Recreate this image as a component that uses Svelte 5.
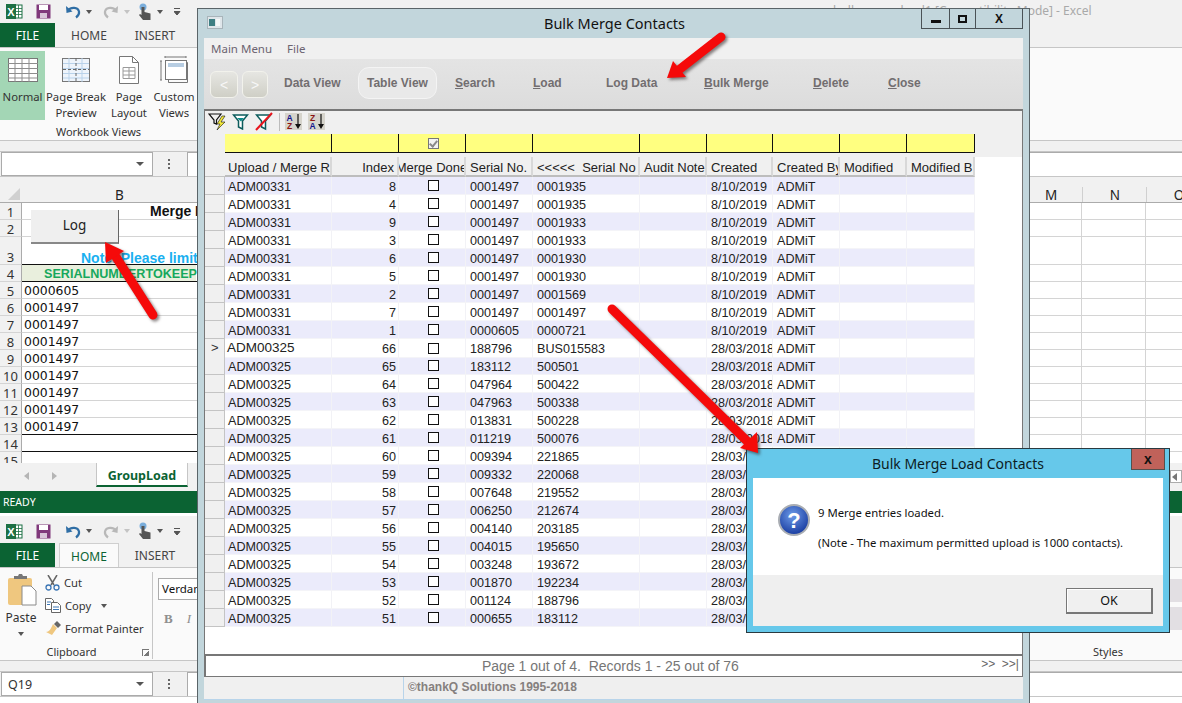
<script lang="ts">
    const nav = [
        { pre: "Data View", w: 74 },
        { pre: "Table View", w: 79, active: true, mr: 18 },
        { u: "S", post: "earch", w: 78 },
        { u: "L", post: "oad", w: 73 },
        { pre: "Lo", u: "g", post: " Data", w: 98 },
        { u: "B", post: "ulk Merge", w: 109 },
        { u: "D", post: "elete", w: 75 },
        { u: "C", post: "lose", w: 60 }
    ];

    const headers = [
        { t: "Upload / Merge R", cls: "first-col" },
        { t: "Index", cls: "right" },
        { t: "Merge Done", cls: "mid" },
        { t: "Serial No." },
        { t: "<<<<<  Serial No" },
        { t: "Audit Note" },
        { t: "Created" },
        { t: "Created By" },
        { t: "Modified" },
        { t: "Modified B" }
    ];

    const raw = `8 0001497 0001935
4 0001497 0001935
9 0001497 0001933
3 0001497 0001933
6 0001497 0001930
5 0001497 0001930
2 0001497 0001569
7 0001497 0001497
1 0000605 0000721
66 188796 BUS015583
65 183112 500501
64 047964 500422
63 047963 500338
62 013831 500228
61 011219 500076
60 009394 221865
59 009332 220068
58 007648 219552
57 006250 212674
56 004140 203185
55 004015 195650
54 003248 193672
53 001870 192234
52 001124 188796
51 000655 183112`;

    const rows = raw.split("\n").map((line, i) => {
        const [index, serial, keep] = line.split(" ");
        return {
            upload: i < 9 ? "ADM00331" : "ADM00325",
            index,
            serial,
            keep,
            created: i < 9 ? "8/10/2019" : "28/03/2018",
            current: i === 9
        };
    });

    const sheetRows = [
        { n: 1, text: "Merge I", cls: "title" },
        { n: 2 },
        { n: 3, text: "Note: Please limit", cls: "note tall" },
        { n: 4, text: "SERIALNUMBERTOKEEP", cls: "head" },
        { n: 5, text: "0000605" },
        { n: 6, text: "0001497" },
        { n: 7, text: "0001497" },
        { n: 8, text: "0001497" },
        { n: 9, text: "0001497" },
        { n: 10, text: "0001497" },
        { n: 11, text: "0001497" },
        { n: 12, text: "0001497" },
        { n: 13, text: "0001497", cls: "end" },
        { n: 14, cls: "end" },
        { n: 15 }
    ];
</script>

{#snippet qat()}
    <svg class="xl" width="17" height="17" viewBox="0 0 17 17">
        <rect x="6" y="2" width="10" height="13" fill="#fff" stroke="#1d7044" />
        <path d="M9 2v13M12.500 2v13M6 5.500h10M6 8.500h10M6 11.500h10" stroke="#1d7044" stroke-width="0.800" />
        <rect x="0" y="1" width="10" height="15" fill="#1d7044" />
        <text x="5" y="12.500" text-anchor="middle" class="xl-x">X</text>
    </svg>
    <svg class="save" width="15" height="15" viewBox="0 0 15 15">
        <rect width="14" height="14" x="0.500" y="0.500" fill="#80397b" />
        <rect x="3" y="1" width="9" height="5" fill="#fff" />
        <rect x="4" y="9" width="7" height="5" fill="#d8c4d8" />
    </svg>
    <svg class="undo" width="16" height="15" viewBox="0 0 16 15">
        <path d="M3 6.500c3-4 10-3.500 11 1 .5 2.500-1 4.500-3 6" fill="none" stroke="#2f6ea5" stroke-width="2.200" />
        <path d="M1 2l.5 7 6-1.500z" fill="#2f6ea5" />
    </svg>
    <i class="caret"></i>
    <svg class="redo" width="16" height="15" viewBox="0 0 16 15">
        <path d="M13 6.500c-3-4-10-3.500-11 1-.5 2.500 1 4.500 3 6" fill="none" stroke="#b8b8b8" stroke-width="2.200" />
        <path d="M15 2l-.5 7-6-1.500z" fill="#b8b8b8" />
    </svg>
    <i class="caret light"></i>
    <svg class="touch" width="14" height="18" viewBox="0 0 14 18">
        <circle cx="5" cy="4" r="3.500" fill="#7aaedc" />
        <path d="M3.500 4h3v5l6 1.500V17H5L1 12l1-1 1.500 1z" fill="#555" />
    </svg>
    <i class="caret"></i>
    <svg class="more" width="7" height="9" viewBox="0 0 7 9">
        <path d="M0 1.500h6M0 4.500l3 3.500 3-3.500z" fill="#555" stroke="#555" stroke-width="1" />
    </svg>
{/snippet}

{#snippet nameBox(value)}
    <div class="formula">
        <div class="namebox"><span>{value}</span><i class="drop"></i></div>
        <div class="dots"><b></b><b></b><b></b></div>
        <div class="fx"></div>
    </div>
{/snippet}

<div class="desktop">
    <section class="excel first">
        <div class="qat">{@render qat()}<span class="doc">bulk merge load1 [Compatibility Mode] - Excel</span></div>
        <div class="tabs">
            <span class="file">FILE</span>
            <span class="tab">HOME</span>
            <span class="tab">INSERT</span>
        </div>
        <div class="ribbon">
            <div class="views">
                <div class="views-row">
                    <div class="view on">
                        <svg width="32" height="26" viewBox="0 0 32 26">
                            <rect x="1.500" y="1.500" width="29" height="23" fill="#fff" stroke="#777" />
                            <path d="M1 6.500h30M1 11.500h30M1 16.500h30M1 21h30M8 1v24M15 1v24M22 1v24" stroke="#8d8d8d" />
                        </svg>
                        <span>Normal</span>
                    </div>
                    <div class="view pb">
                        <svg width="29" height="26" viewBox="0 0 29 26">
                            <rect x="0.500" y="1.500" width="27" height="23" fill="#eef4fb" stroke="#777" />
                            <path d="M1 6.500h26M1 11.500h26M1 16.500h26M1 21h26M7 1v24M20 1v24" stroke="#b9d2ea" />
                            <path d="M14 1v24M1 12.500h26" stroke="#666" stroke-dasharray="3 2" />
                        </svg>
                        <span>Page Break<br />Preview</span>
                    </div>
                    <div class="view pl">
                        <svg width="22" height="28" viewBox="0 0 22 28">
                            <path d="M1.500.5h13l6 6v21h-19z" fill="#fff" stroke="#777" />
                            <path d="M14.500.5v6h6" fill="none" stroke="#777" />
                            <path d="M5 11.500h12v11H5zM5 15h12M5 19h12M11 11.500v11" fill="none" stroke="#9a9a9a" />
                        </svg>
                        <span>Page<br />Layout</span>
                    </div>
                    <div class="view cv">
                        <svg width="29" height="28" viewBox="0 0 29 28">
                            <path d="M1 5v19M0 5h2M0 24h2M5 1h21M5 0v2M26 0v2" stroke="#777" fill="none" />
                            <rect x="5.500" y="4.500" width="21" height="19" fill="#fff" stroke="#777" />
                            <path d="M8.500 23.500v3h19v-20h-1" fill="none" stroke="#777" />
                            <rect x="8" y="7" width="16" height="4" fill="#b7cde2" />
                        </svg>
                        <span>Custom<br />Views</span>
                    </div>
                </div>
                <div class="group-label">Workbook Views</div>
            </div>
        </div>
        <div class="band"></div>
        {@render nameBox("")}
        <div class="colheads">
            <div class="corner"><i></i></div>
            <div class="col b">B</div>
            <div class="col filler"></div>
            <div class="col m">M</div>
            <div class="col m">N</div>
            <div class="col m">O</div>
        </div>
        <div class="sheet">
            {#each sheetRows as r}
                <div class="srow {r.cls ?? ''}">
                    <div class="rh">{r.n}</div>
                    <div class="cell main"><span>{r.text ?? ""}</span></div>
                    <div class="cell m"></div>
                    <div class="cell m"></div>
                    <div class="cell last"></div>
                </div>
            {/each}
        </div>
        <div class="sheet-tabs">
            <i class="arr left"></i>
            <i class="arr"></i>
            <span class="sheet-tab">GroupLoad</span>
            <div class="hscroll"><i></i></div>
        </div>
        <div class="ready">READY</div>
    </section>

    <section class="excel second">
        <div class="qat">{@render qat()}</div>
        <div class="tabs">
            <span class="file">FILE</span>
            <span class="tab current">HOME</span>
            <span class="tab">INSERT</span>
        </div>
        <div class="ribbon">
            <div class="clipboard">
                <div class="clip-row">
                    <div class="paste">
                        <svg width="30" height="32" viewBox="0 0 30 32">
                            <rect x="1" y="4" width="24" height="27" rx="2" fill="#efc77f" />
                            <path d="M7 5V2h4l1-2h3l1 2h4v3z" fill="#777" />
                            <path d="M15 12h9l5 5v14H15z" fill="#fff" stroke="#8a8a8a" />
                        </svg>
                        <span>Paste</span>
                        <i class="caret"></i>
                    </div>
                    <div class="clip-cmds">
                        <div class="cmd">
                            <svg width="15" height="16" viewBox="0 0 15 16">
                                <path d="M3 0l6 10M12 0L6 10" stroke="#666" stroke-width="1.500" />
                                <circle cx="3.500" cy="12.500" r="2.500" fill="none" stroke="#3d77b5" stroke-width="1.300" />
                                <circle cx="11.500" cy="12.500" r="2.500" fill="none" stroke="#3d77b5" stroke-width="1.300" />
                            </svg>
                            <span>Cut</span>
                        </div>
                        <div class="cmd">
                            <svg width="16" height="15" viewBox="0 0 16 15">
                                <path d="M.5.500h6l2 2v9h-8z" fill="#fff" stroke="#666" />
                                <path d="M6.500 4.500h6l3 3v7h-9z" fill="#fff" stroke="#666" />
                                <path d="M2 4h4M2 6.500h3M8 9h6M8 11.500h6" stroke="#3d77b5" />
                            </svg>
                            <span>Copy</span><i class="caret"></i>
                        </div>
                        <div class="cmd">
                            <svg width="16" height="15" viewBox="0 0 16 15">
                                <path d="M8 3l4 4-5 7-6-3c3 0 5-3 7-8z" fill="#efc77f" />
                                <path d="M9 3l3-3 4 4-3 3z" fill="#666" />
                            </svg>
                            <span>Format Painter</span>
                        </div>
                    </div>
                </div>
                <div class="group-label">Clipboard<i class="launcher"></i></div>
            </div>
            <div class="font">
                <div class="fontbox">Verdana</div>
                <div class="fontfx"><b>B</b><em>I</em></div>
            </div>
            <div class="styles">
                <div class="swatches"><i></i><i></i></div>
                <div class="group-label">Styles</div>
            </div>
        </div>
        <div class="band"></div>
        {@render nameBox("Q19")}
    </section>

    <section class="window">
        <div class="titlebar">
            <svg class="appicon" width="16" height="13" viewBox="0 0 16 13">
                <rect x="0.500" y="0.500" width="15" height="12" fill="#dfe6ea" stroke="#a8b4ba" />
                <rect x="2" y="3" width="6" height="7" fill="#3e7f83" />
                <rect x="9" y="3" width="4" height="7" fill="#f4f8f8" />
            </svg>
            <span>Bulk Merge Contacts</span>
            <div class="controls">
                <div class="ctl min"><i></i></div>
                <div class="ctl max"><i></i></div>
                <div class="ctl close">X</div>
            </div>
        </div>
        <div class="menubar"><span>Main Menu</span><span>File</span></div>
        <div class="toolbar">
            <div class="back"><span>&lt;</span></div>
            <div class="back fwd"><span>&gt;</span></div>
            <div class="nav">
                {#each nav as item}
                    <div class="nav-item" class:active={item.active} style="width:{item.w}px;margin-right:{item.mr ?? 0}px">
                        {item.pre ?? ""}{#if item.u}<u>{item.u}</u>{/if}{item.post ?? ""}
                    </div>
                {/each}
            </div>
        </div>
        <div class="grid-area">
            <div class="filters">
                <svg width="21" height="19" viewBox="0 0 21 19">
                    <path d="M1 2h12L8.500 8v4L6 11V8z" fill="none" stroke="#111" stroke-width="1.200" />
                    <path d="M14 4l-5 8h3l-3 6 8-8h-4l4-6z" fill="#f3e83a" stroke="#111" stroke-width="0.600" />
                </svg>
                <svg width="17" height="17" viewBox="0 0 17 17">
                    <path d="M1.500 2h14l-5 6v8l-4-2V8z" fill="#fff" stroke="#0c5c5c" stroke-width="1.500" />
                    <path d="M5 5h7l-3 3.500z" fill="#0c8a8a" />
                </svg>
                <svg class="clear" width="18" height="19" viewBox="0 0 18 19">
                    <path d="M1.500 3h14l-5 6v8l-4-2V9z" fill="#fff" stroke="#0c5c5c" stroke-width="1.500" />
                    <path d="M1 18L17 1" stroke="#e8141c" stroke-width="2" />
                </svg>
                <i class="sep"></i>
                <svg class="sort" width="17" height="17" viewBox="0 0 17 17">
                    <rect width="17" height="17" fill="#d6d4cc" />
                    <text x="4.500" y="7.500" class="az blue">A</text>
                    <text x="4.500" y="15.500" class="az red">Z</text>
                    <path d="M13 1v11" stroke="#111" stroke-width="1.200" />
                    <path d="M10 11h6l-3 5z" fill="#111" />
                </svg>
                <svg class="sort" width="17" height="17" viewBox="0 0 17 17">
                    <rect width="17" height="17" fill="#d6d4cc" />
                    <text x="4.500" y="7.500" class="az red">Z</text>
                    <text x="4.500" y="15.500" class="az blue">A</text>
                    <path d="M13 1v11" stroke="#111" stroke-width="1.200" />
                    <path d="M10 11h6l-3 5z" fill="#111" />
                </svg>
            </div>
            <div class="filter-band">
                <div class="g-row filter-row">
                    <div class="rowhead"></div>
                    {#each headers as h, i}
                        <div class="yellow">{#if i === 2}<span class="filter-check"></span>{/if}</div>
                    {/each}
                </div>
            </div>
            <div class="g-row header-row">
                <div class="rowhead"></div>
                {#each headers as h}
                    <div class="hcell {h.cls ?? ''}"><span>{h.t}</span></div>
                {/each}
            </div>
            {#each rows as r, i}
                <div class="g-row data" class:alt={i % 2 === 0} class:current={r.current}>
                    <div class="rowhead">{r.current ? ">" : ""}</div>
                    <div class="c upload">{r.upload}</div>
                    <div class="c right">{r.index}</div>
                    <div class="c mid"><span class="check"></span></div>
                    <div class="c">{r.serial}</div>
                    <div class="c">{r.keep}</div>
                    <div class="c"></div>
                    <div class="c">{r.created}</div>
                    <div class="c">ADMiT</div>
                    <div class="c"></div>
                    <div class="c"></div>
                </div>
            {/each}
        </div>
        <div class="statusbar">
            <span class="records">Page 1 out of 4.&nbsp; Records 1 - 25 out of 76</span>
            <span class="pager">&gt;&gt;&nbsp; &gt;&gt;|</span>
        </div>
        <div class="footer">
            <div class="foot-left"></div>
            <div class="foot-right">©thankQ Solutions 1995-2018</div>
        </div>
    </section>

    <section class="dialog">
        <div class="dlg-title">
            <span>Bulk Merge Load Contacts</span>
            <div class="dlg-close">x</div>
        </div>
        <div class="dlg-body">
            <svg width="32" height="32" viewBox="0 0 32 32">
                <defs>
                    <radialGradient id="qmark" cx="0.450" cy="0.350" r="0.700">
                        <stop offset="0" stop-color="#6d9be8" />
                        <stop offset="1" stop-color="#12349a" />
                    </radialGradient>
                </defs>
                <circle cx="16" cy="16" r="15" fill="url(#qmark)" stroke="#a9adb3" stroke-width="2" />
                <text x="16" y="24" text-anchor="middle" class="qmark">?</text>
            </svg>
            <div class="dlg-text">
                <p>9 Merge entries loaded.</p>
                <p>(Note - The maximum permitted upload is 1000 contacts).</p>
            </div>
        </div>
        <div class="dlg-actions"><div class="ok">OK</div></div>
    </section>

    <div class="logbtn">Log</div>

    <svg class="arrows" width="1182" height="703" viewBox="0 0 1182 703">
        <g class="arrow">
            <path d="M153 315L116 257" stroke="#f50a0a" stroke-width="9" stroke-linecap="round" />
            <path d="M105 242l1 21 18-12z" fill="#f50a0a" />
            <path d="M721 37L680 69" stroke="#f50a0a" stroke-width="9" stroke-linecap="round" />
            <path d="M667 78l6-17 13 16z" fill="#f50a0a" />
            <path d="M612 309L748 442" stroke="#f50a0a" stroke-width="9" stroke-linecap="round" />
            <path d="M758 453l-18-5 17-16z" fill="#f50a0a" />
        </g>
    </svg>
</div>

<style>
    :global(body) {
        margin: 0;
        background: #fff;
    }

    .desktop {
        position: relative;
        width: 1182px;
        height: 703px;
        overflow: hidden;
        font-family: "Noto Sans", sans-serif;
        color: #333;
    }

    .excel {
        display: flex;
        flex-direction: column;
        overflow: hidden;
        background: #fff;
    }

    .first {
        height: 516px;
    }

    .second {
        height: 187px;
    }

    .qat {
        height: 23px;
        flex: none;
        display: flex;
        align-items: center;
        background: #f1f1f1;
        padding-left: 6px;
    }

    .second .qat {
        height: 27px;
        padding-top: 3px;
        box-sizing: border-box;
    }

    .xl-x {
        font: bold 11px "Liberation Sans", sans-serif;
        fill: #fff;
    }

    .save {
        margin-left: 13px;
    }

    .undo {
        margin-left: 14px;
    }

    .redo {
        margin-left: 11px;
    }

    .touch {
        margin-left: 8px;
    }

    .more {
        margin-left: 11px;
    }

    .caret {
        display: inline-block;
        width: 0;
        height: 0;
        margin-left: 5px;
        border: 3px solid transparent;
        border-top: 4px solid #555;
        border-bottom: 0;
    }

    .caret.light {
        border-top-color: #c4c4c4;
    }

    .doc {
        position: absolute;
        left: 833px;
        top: 2px;
        font-size: 12px;
        color: #a9a9a9;
        white-space: nowrap;
    }

    .tabs {
        height: 25px;
        flex: none;
        display: flex;
        align-items: stretch;
        background: #f1f1f1;
        font-size: 12px;
        color: #444;
        box-sizing: border-box;
        margin-bottom: -1px;
    }

    .file {
        width: 55px;
        background: #0b6333;
        color: #fff;
        display: flex;
        align-items: center;
        justify-content: center;
    }

    .tab {
        display: flex;
        align-items: center;
        justify-content: center;
        width: 64px;
    }

    .tab:nth-child(2) {
        margin-left: 3px;
        width: 62px;
    }

    .tab:nth-child(3) {
        margin-left: 3px;
    }

    .tab.current {
        background: #fafafa;
        border: 1px solid #cfcfcf;
        border-bottom: 0;
        color: #0b6333;
        margin-left: 4px;
        width: 60px;
        box-sizing: border-box;
    }

    .tab.current + .tab {
        margin-left: 4px;
    }

    .ribbon {
        height: 94px;
        flex: none;
        box-sizing: border-box;
        display: flex;
        background: #fafafa;
        border-top: 1px solid #c6c6c6;
        border-bottom: 1px solid #c6c6c6;
    }

    .views {
        width: 197px;
        display: flex;
        flex-direction: column;
    }

    .views-row {
        display: flex;
        height: 73px;
        padding-top: 3px;
    }

    .view {
        display: flex;
        flex-direction: column;
        align-items: center;
        font-size: 11.300px;
        line-height: 16px;
        text-align: center;
        white-space: nowrap;
        padding-top: 5px;
    }

    .view svg {
        height: 28px;
        margin-bottom: 5px;
    }

    .view.on {
        width: 45px;
        height: 69px;
        background: #a3d6b5;
        box-sizing: border-box;
    }

    .pb {
        width: 62px;
    }

    .pl {
        width: 44px;
    }

    .cv {
        width: 46px;
    }

    .group-label {
        position: relative;
        font-size: 11px;
        text-align: center;
        line-height: 16px;
    }

    .band {
        height: 10px;
        flex: none;
        background: #f1f1f1;
    }

    .formula {
        height: 26px;
        flex: none;
        box-sizing: border-box;
        display: flex;
        align-items: center;
        border-top: 1px solid #c6c6c6;
        border-bottom: 1px solid #c6c6c6;
        background: #f1f1f1;
        padding-left: 1px;
    }

    .namebox {
        width: 152px;
        height: 24px;
        box-sizing: border-box;
        border: 1px solid #ababab;
        background: #fff;
        display: flex;
        align-items: center;
        justify-content: space-between;
        padding: 0 8px 0 6px;
        font-size: 12.500px;
    }

    .drop {
        width: 0;
        height: 0;
        border: 4px solid transparent;
        border-top: 4px solid #555;
        border-bottom: 0;
    }

    .dots {
        width: 8px;
        margin: 0 14px 0 12px;
        display: flex;
        flex-direction: column;
        align-items: center;
        gap: 2px;
    }

    .dots b {
        width: 2px;
        height: 2px;
        background: #666;
    }

    .fx {
        flex: 1;
        height: 24px;
        box-sizing: border-box;
        background: #fff;
        border-left: 1px solid #ababab;
        border-top: 1px solid #ababab;
    }

    .colheads {
        height: 26px;
        flex: none;
        display: flex;
        background: #f1f1f1;
        box-sizing: border-box;
        border-bottom: 1px solid #ababab;
        font-size: 13.500px;
        line-height: 14px;
        color: #222;
    }

    .corner {
        width: 23px;
        flex: none;
        position: relative;
    }

    .corner i {
        position: absolute;
        right: 3px;
        bottom: 2px;
        border-style: solid;
        border-width: 0 0 12px 12px;
        border-color: transparent transparent #d0d0d0;
    }

    .col {
        display: flex;
        flex: none;
        align-items: flex-end;
        justify-content: center;
        box-sizing: border-box;
    }

    .col.b {
        width: 193px;
    }

    .col.filler {
        width: 803px;
    }

    .col.m {
        width: 64px;
        position: relative;
    }

    .col.m::after {
        content: "";
        position: absolute;
        right: 0;
        top: 10px;
        bottom: 0;
        width: 1px;
        background: #d0d0d0;
    }

    .sheet {
        flex: 1;
        overflow: hidden;
    }

    .srow {
        display: flex;
        height: 17px;
        font: 12.400px/18px "DejaVu Sans", sans-serif;
        color: #111;
    }

    .srow.tall {
        height: 28px;
    }

    .rh {
        width: 22px;
        flex: none;
        box-sizing: border-box;
        background: #f1f1f1;
        border-right: 1px solid #ababab;
        border-bottom: 1px solid #d4d4d4;
        font: 13px/14px "Noto Sans", sans-serif;
        color: #333;
        height: 100%;
        display: flex;
        align-items: flex-end;
        justify-content: center;
        white-space: nowrap;
    }

    .cell {
        flex: none;
        width: 996px;
        box-sizing: border-box;
        padding-left: 2px;
        white-space: nowrap;
        overflow: hidden;
        border-bottom: 1px solid #d4d4d4;
    }

    .cell.m {
        width: 64px;
        border-right: 1px solid #d4d4d4;
    }

    .cell.last {
        flex: 1;
        width: auto;
    }

    .srow.title span {
        margin-left: 126px;
        font: bold 14px "Liberation Sans", sans-serif;
    }

    .srow.note .cell {
        padding-top: 13px;
    }

    .srow.note span {
        margin-left: 57px;
        font: bold 14px/16px "Liberation Sans", sans-serif;
        color: #1ab0f0;
        display: block;
    }

    .srow.head .main {
        border-top: 1px solid #111;
        border-bottom: 1px solid #111;
        margin-top: -1px;
        height: 18px;
        background: linear-gradient(90deg, #e9efdd 0, #e9efdd 174px, #fff 174px);
    }

    .srow.head span {
        margin-left: 20px;
        font: bold 12.600px/17px "Liberation Sans", sans-serif;
        color: #16a85c;
    }

    .srow.end .main {
        border-bottom-color: #111;
    }

    .sheet-tabs {
        height: 28px;
        flex: none;
        display: flex;
        box-sizing: border-box;
        background: #f1f1f1;
        position: relative;
        padding-left: 96px;
        align-items: flex-start;
    }

    .arr {
        position: absolute;
        left: 24px;
        top: 9px;
        border: 4px solid transparent;
        border-left: 5px solid #b5b5b5;
        border-right: 0;
    }

    .arr.left {
        border-left: 0;
        border-right: 5px solid #b5b5b5;
    }

    .arr:not(.left) {
        left: 52px;
    }

    .sheet-tab {
        width: 92px;
        height: 24px;
        box-sizing: border-box;
        background: #fff;
        border-left: 1px solid #c6c6c6;
        border-right: 1px solid #c6c6c6;
        border-bottom: 2px solid #0b6333;
        color: #0b6333;
        font-size: 12.500px;
        font-weight: 700;
        line-height: 26px;
        text-align: center;
        overflow: hidden;
    }

    .hscroll {
        position: absolute;
        left: 1170px;
        top: 7px;
        width: 12px;
        height: 13px;
        background: #fff;
        border: 1px solid #ababab;
        box-sizing: border-box;
    }

    .hscroll i {
        display: block;
        margin: 2px 0 0 1px;
        width: 0;
        height: 0;
        border: 4px solid transparent;
        border-right: 5px solid #777;
        border-left: 0;
    }

    .ready {
        height: 22px;
        flex: none;
        background: #0b6333;
        color: #fff;
        font-size: 10.500px;
        line-height: 23px;
        padding-left: 3px;
        margin-bottom: 3px;
    }

    .clipboard {
        width: 153px;
        flex: none;
        display: flex;
        flex-direction: column;
        border-right: 1px solid #c6c6c6;
        margin-top: 4px;
        margin-bottom: 1px;
        box-sizing: border-box;
    }

    .clip-row {
        flex: 1;
        display: flex;
    }

    .paste {
        width: 42px;
        display: flex;
        flex-direction: column;
        align-items: center;
        font-size: 12px;
        line-height: 16px;
        padding-top: 2px;
    }

    .paste svg {
        margin-bottom: 4px;
        margin-left: 2px;
    }

    .paste .caret {
        margin: 6px 0 0;
    }

    .clip-cmds {
        display: flex;
        flex-direction: column;
        margin-top: -1px;
        margin-left: 3px;
    }

    .cmd {
        height: 23px;
        display: flex;
        align-items: center;
        gap: 4px;
        font-size: 11.200px;
        white-space: nowrap;
    }

    .cmd .caret {
        margin-left: 6px;
    }

    .clipboard .group-label {
        padding-right: 9px;
        height: 14px;
        line-height: 14px;
    }

    .launcher {
        position: absolute;
        right: 3px;
        top: 4px;
        width: 6px;
        height: 6px;
        border-left: 1px solid #777;
        border-top: 1px solid #777;
        background: linear-gradient(135deg, transparent 55%, #777 55%);
    }

    .font {
        padding: 10px 0 0 5px;
    }

    .fontbox {
        width: 60px;
        height: 22px;
        box-sizing: border-box;
        border: 1px solid #ababab;
        background: #fff;
        font-size: 11.500px;
        line-height: 20px;
        padding-left: 3px;
        color: #111;
    }

    .fontfx {
        display: flex;
        gap: 14px;
        margin-top: 11px;
        padding-left: 6px;
        font: 13px "Liberation Serif", serif;
        color: #8f8f8f;
    }

    .styles {
        margin-left: auto;
        width: 148px;
        display: flex;
        flex-direction: column;
    }

    .swatches {
        flex: 1;
        display: flex;
        flex-direction: column;
        align-items: flex-end;
        gap: 5px;
        padding-top: 11px;
    }

    .swatches i {
        width: 12px;
        height: 23px;
        background: #e2dfe3;
    }

    .styles .group-label {
        height: 16px;
    }

    .window {
        position: absolute;
        left: 197px;
        top: 8px;
        width: 833px;
        height: 700px;
        box-sizing: border-box;
        border: 1px solid #5a6468;
        border-bottom: 0;
        background: #c2d6dc;
        padding: 0 6px;
        display: flex;
        flex-direction: column;
    }

    .titlebar {
        height: 29px;
        flex: none;
        position: relative;
        display: flex;
        align-items: center;
        justify-content: center;
        font-size: 14.500px;
        color: #111;
        padding-left: 2px;
        padding-bottom: 1px;
        box-sizing: border-box;
    }

    .appicon {
        position: absolute;
        left: 3px;
        top: 7px;
    }

    .controls {
        position: absolute;
        right: 0;
        top: 0;
        display: flex;
        height: 20px;
        border: 1px solid #4a5256;
        border-top: 0;
        box-sizing: border-box;
    }

    .ctl {
        display: flex;
        align-items: center;
        justify-content: center;
        border-right: 1px solid #4a5256;
    }

    .ctl.min {
        width: 27px;
    }

    .ctl.min i {
        width: 10px;
        height: 3px;
        background: #111;
        margin-top: 6px;
    }

    .ctl.max {
        width: 25px;
    }

    .ctl.max i {
        border: 2px solid #111;
        box-sizing: content-box;
        width: 5px;
        height: 4px;
    }

    .ctl.close {
        width: 46px;
        border-right: 0;
        font: bold 12px "Liberation Sans", sans-serif;
        color: #111;
    }

    .menubar {
        height: 21px;
        flex: none;
        background: #f0f0f0;
        display: flex;
        align-items: center;
        gap: 15px;
        padding-left: 7px;
        font-size: 11.500px;
        color: #6c6470;
    }

    .toolbar {
        height: 52px;
        flex: none;
        box-sizing: border-box;
        background: linear-gradient(#e4e4e4, #dcdcdc);
        border-bottom: 2px solid #777;
        display: flex;
        align-items: center;
        padding: 0 0 2px 6px;
    }

    .back {
        width: 26px;
        height: 25px;
        border-radius: 6px;
        border: 1px solid #f2f2ec;
        background: linear-gradient(#e6e6e2, #cfcfc6);
        color: #f7f7f7;
        display: flex;
        align-items: center;
        justify-content: center;
        font: 14px "Liberation Sans", sans-serif;
        margin-right: 4px;
        margin-top: 3px;
    }

    .fwd {
        width: 24px;
    }

    .nav {
        display: flex;
        align-items: center;
        margin-left: 12px;
        font: bold 12px "Liberation Sans", sans-serif;
        color: #726e70;
    }

    .nav-item {
        white-space: nowrap;
        flex: none;
        height: 32px;
        line-height: 32px;
        box-sizing: border-box;
    }

    .nav-item.active {
        border: 1px solid #f4f4f4;
        border-radius: 11px;
        background: #e9e9e9;
        padding-left: 8px;
        line-height: 30px;
    }

    .grid-area {
        height: 543px;
        flex: none;
        box-sizing: border-box;
        background: #fff;
        border-left: 1px solid #777;
        border-right: 1px solid #777;
    }

    .filters {
        height: 23px;
        box-sizing: border-box;
        background: #f0f0f0;
        display: flex;
        align-items: center;
        padding: 0 0 2px 3px;
    }

    .filters svg {
        margin-right: 3px;
    }

    .clear {
        margin-left: 3px;
    }

    .sep {
        width: 1px;
        height: 18px;
        background: #bcbcbc;
        margin: 0 5px 0 3px;
    }

    .sort {
        margin-right: 6px !important;
    }

    .az {
        font: bold 8.500px "Liberation Sans", sans-serif;
        text-anchor: middle;
    }

    .blue {
        fill: #14148c;
    }

    .red {
        fill: #8c1414;
    }

    .g-row {
        display: grid;
        grid-template-columns: 20px 107px 67px 67px 67px 107px 67px 66px 67px 67px 68px;
        width: 770px;
    }

    .rowhead {
        background: #f0f0f0;
        box-sizing: border-box;
        border-bottom: 1px solid #c4c4c4;
        padding-left: 6px;
        font: 13px/18px "Liberation Sans", sans-serif;
        color: #333;
    }

    .filter-band {
        height: 23px;
        background: #f0f0f0;
    }

    .filter-row .rowhead {
        border-bottom: 0;
    }

    .yellow {
        height: 19px;
        box-sizing: border-box;
        background: #ffff80;
        border-right: 1px solid #111;
        border-bottom: 1px solid #111;
        display: flex;
        align-items: center;
        justify-content: center;
    }

    .filter-check {
        width: 11px;
        height: 11px;
        box-sizing: border-box;
        border: 1px solid #777;
        background: #f3f3f3;
        position: relative;
        margin-left: 2px;
    }

    .filter-check::after {
        content: "";
        position: absolute;
        left: 2px;
        top: 0;
        width: 3px;
        height: 6px;
        border: solid #8a8a8a;
        border-width: 0 2px 2px 0;
        transform: rotate(40deg);
    }

    .header-row {
        height: 20px;
    }

    .hcell {
        background: #f0f0f0;
        box-sizing: border-box;
        border-right: 2px solid #d8d8d8;
        border-bottom: 2px solid #bdbdbd;
        display: flex;
        align-items: center;
        padding: 2px 3px 0 4px;
        overflow: hidden;
        white-space: nowrap;
        font: 13px "Liberation Sans", sans-serif;
        color: #222;
    }

    .hcell span {
        white-space: pre;
    }

    .hcell.first-col {
        padding-left: 3px;
    }

    .hcell.right {
        justify-content: flex-end;
    }

    .hcell.mid {
        justify-content: center;
        padding: 2px 0 0;
    }

    .data {
        height: 18px;
        font: 12.600px/18px "Liberation Sans", sans-serif;
        color: #222;
    }

    .data.alt {
        background: #ebebfb;
    }

    .data .c {
        box-sizing: border-box;
        padding: 1px 3px 0 4px;
        border-right: 1px solid #f2f2f6;
        border-bottom: 1px solid #f4f4f8;
        white-space: nowrap;
        overflow: hidden;
    }

    .data .rowhead {
        border-right: 1px solid #c4c4c4;
    }

    .data .c.upload {
        padding-left: 3px;
    }

    .data .c.right {
        text-align: right;
        padding-right: 2px;
    }

    .data .c.mid {
        display: flex;
        align-items: center;
        justify-content: center;
        padding: 0 0 0 2px;
    }

    .current .c.upload {
        font-size: 13.500px;
        line-height: 17px;
        padding: 0 0 0 2px;
    }

    .check {
        width: 11px;
        height: 11px;
        box-sizing: border-box;
        border: 1px solid #111;
        background: #fff;
    }

    .statusbar {
        height: 23px;
        flex: none;
        box-sizing: border-box;
        background: #fff;
        border-top: 2px solid #777;
        border-left: 2px solid #777;
        border-right: 1px solid #777;
        border-bottom: 1px solid #777;
        position: relative;
        display: flex;
        align-items: center;
        font: 14px "Liberation Sans", sans-serif;
        color: #767676;
    }

    .records {
        margin-left: 276px;
        white-space: nowrap;
    }

    .pager {
        position: absolute;
        right: 3px;
        top: 1px;
        font: 12px "Liberation Sans", sans-serif;
        color: #666;
    }

    .footer {
        height: 22px;
        flex: none;
        display: flex;
        background: #f0f0f0;
        border-bottom: 1px solid #b8d4ea;
    }

    .foot-left {
        width: 199px;
        border-right: 1px solid #b8d4ea;
    }

    .foot-right {
        flex: 1;
        background: #efefef;
        padding-left: 4px;
        font: bold 12px/20px "Liberation Sans", sans-serif;
        color: #85807e;
    }

    .dialog {
        position: absolute;
        left: 746px;
        top: 448px;
        width: 424px;
        height: 185px;
        box-sizing: border-box;
        border: 1px solid #2a3a40;
        background: #66c8ea;
        padding: 0 6px 6px;
        display: flex;
        flex-direction: column;
    }

    .dlg-title {
        height: 29px;
        flex: none;
        display: flex;
        align-items: center;
        justify-content: center;
        font-size: 14px;
        color: #0c1c24;
        position: relative;
        padding-bottom: 1px;
        box-sizing: border-box;
    }

    .dlg-close {
        position: absolute;
        right: -2px;
        top: 0;
        width: 34px;
        height: 21px;
        box-sizing: border-box;
        background: #c0625a;
        border: 1px solid #55504e;
        border-top: 0;
        color: #111;
        display: flex;
        align-items: center;
        justify-content: center;
        font: bold 14px/16px "Liberation Sans", sans-serif;
    }

    .dlg-body {
        height: 97px;
        flex: none;
        background: #fff;
        display: flex;
        align-items: flex-start;
        padding: 26px 0 0 25px;
        box-sizing: border-box;
        gap: 8px;
    }

    .qmark {
        font: bold 22px "Liberation Sans", sans-serif;
        fill: #fff;
    }

    .dlg-text {
        font-size: 11.300px;
        color: #111;
        padding-top: 1px;
    }

    .dlg-text p {
        margin: 0 0 14px;
        line-height: 16px;
        white-space: nowrap;
    }

    .dlg-actions {
        flex: 1;
        background: #efefef;
        display: flex;
        justify-content: flex-end;
        align-items: flex-start;
        padding: 13px 10px 0 0;
    }

    .ok {
        width: 87px;
        height: 26px;
        box-sizing: border-box;
        border: 1px solid #777;
        border-right-width: 2px;
        border-bottom-width: 2px;
        background: #f0f0f0;
        box-shadow: inset 1px 1px 0 #fff;
        font-size: 12.500px;
        line-height: 23px;
        text-align: center;
        color: #111;
    }

    .logbtn {
        position: absolute;
        left: 31px;
        top: 210px;
        width: 88px;
        height: 34px;
        box-sizing: border-box;
        background: #efefef;
        border-right: 1px solid #666;
        border-bottom: 2px solid #888;
        font: 13.500px/30px "Noto Sans", sans-serif;
        color: #222;
        text-align: center;
    }

    .arrows {
        position: absolute;
        left: 0;
        top: 0;
        pointer-events: none;
    }

    .arrow {
        filter: drop-shadow(2px 2px 1.500px rgba(40, 30, 30, 0.550));
    }
</style>
